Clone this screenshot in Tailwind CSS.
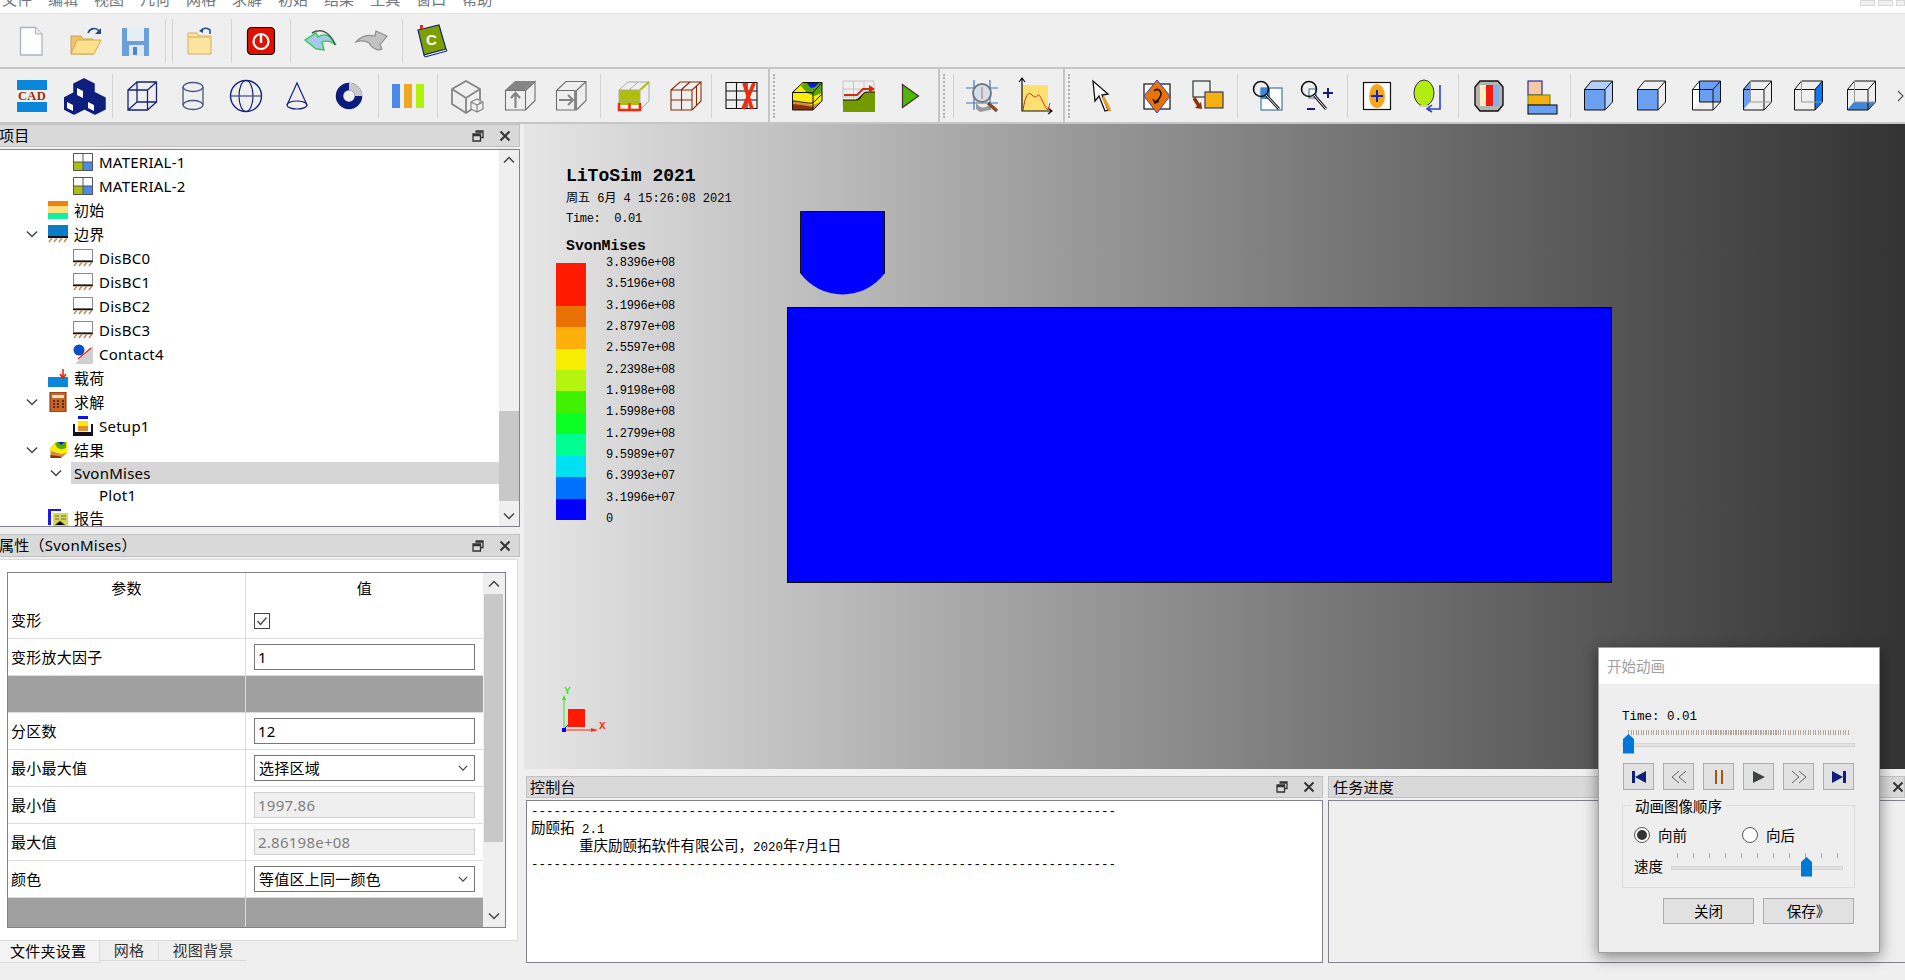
<!DOCTYPE html>
<html lang="zh-CN">
<head>
  <meta charset="UTF-8">
  <title>LiToSim 2021</title>
  <script src="https://cdn.jsdelivr.net/npm/@tailwindcss/browser@4"></script>
</head>
<body class="w-[1905px] h-[980px] overflow-hidden relative bg-[#efefef] text-black text-[15px] tracking-[0.25px] font-['Noto_Sans','Noto_Sans_CJK_SC',sans-serif]">

  <svg width="0" height="0" class="absolute">
    <defs>
      <symbol id="float" viewBox="0 0 12 12"><path d="M3.5 1h7.500v6.500h-2.500M1 4h7.500v7h-7.500zM1 5.500h7.500M3.500 2.200h7.500" fill="none" stroke="#333" stroke-width="1.300"/></symbol>
      <symbol id="close" viewBox="0 0 12 12"><path d="M1.500 1.500l9 9M10.500 1.500l-9 9" stroke="#333" stroke-width="2"/></symbol>
      <symbol id="chev" viewBox="0 0 12 12"><path d="M1 3.500l5 5 5-5" fill="none" stroke="#444" stroke-width="1.500"/></symbol>
      <symbol id="material" viewBox="0 0 20 18"><rect width="20" height="18" fill="#fff"/><rect y="9" width="10" height="9" fill="#a8bf10"/><rect x="10" y="9" width="10" height="9" fill="#4a8ae8"/><path d="M.5.500h19v17h-19zM10 0v18M0 9h20" fill="none" stroke="#555"/></symbol>
      <symbol id="disbc" viewBox="0 0 20 18"><rect x=".5" y=".5" width="19" height="11" fill="#fff" stroke="#8a8a8a"/><path d="M0 12.500h20" stroke="#111" stroke-width="1.500"/><path d="M1 17l3-4M6 17l3-4M11 17l3-4M16 17l3-4" stroke="#c08a5c" stroke-width="1.500"/></symbol>
    </defs>
  </svg>

  <!-- menu, cut off by the top of the window -->
  <div class="h-[14px] bg-white border-b border-[#e4e4e4] overflow-hidden relative">
    <div class="flex gap-[16px] pl-[2px] mt-[-11px] text-[15px] tracking-normal leading-[20px] text-[#6f7780]">
      <span>文件</span><span>编辑</span><span>视图</span><span>几何</span><span>网格</span><span>求解</span><span>初始</span><span>结果</span><span>工具</span><span>窗口</span><span>帮助</span>
    </div>
    <div class="absolute right-0 top-0 flex gap-[3px]">
      <div class="w-[15px] h-[6px] bg-[#eef0f2] border border-[#d8d8d8]"></div>
      <div class="w-[15px] h-[6px] bg-[#eef0f2] border border-[#d8d8d8]"></div>
      <div class="w-[9px] h-[6px] bg-[#eef0f2] border border-[#d8d8d8]"></div>
    </div>
  </div>

  <!-- first toolbar -->
  <div class="h-[55px] flex items-center pl-[11px] border-b-2 border-[#c6c6c6]">
    <svg width="40" height="40"><path d="M9.500 6.500h15l6.500 6.500v21h-21.500z" fill="#fff" stroke="#aab4bf" stroke-width="1.300"/><path d="M24.500 6.500v6.500h6.500" fill="#e8edf2" stroke="#aab4bf"/></svg>
    <svg width="40" height="40" class="ml-[14px]"><path d="M6 33v-18h10l2 3h10v15z" fill="#f2c36c" stroke="#c8a15a"/><path d="M6 33l6-14h24l-7 14z" fill="#fde08c" stroke="#d4a850"/><path d="M23 12c2-5 8-6 11-2" fill="none" stroke="#1f4d8a" stroke-width="1.600"/><path d="M36 7v6h-6z" fill="#1f4d8a"/></svg>
    <svg width="40" height="40" class="ml-[10px]"><path d="M7 7h27v28h-27z" fill="#6b9fd8"/><rect x="12" y="7" width="17" height="13" fill="#e6eef5"/><rect x="14" y="24" width="15" height="11" fill="#dfe8f0"/><rect x="18" y="26" width="4" height="8" fill="#4a86c8"/></svg>
    <div class="w-px h-[44px] bg-[#d4d4d4] ml-[10px]"></div>
    <div class="w-px h-[44px] bg-[#d4d4d4] ml-[6px]"></div>
    <svg width="40" height="40" class="ml-[6px]"><path d="M9 33v-21h9l2 3h12v18z" fill="#fde4a0" stroke="#d2ad66"/><path d="M9 16h23" stroke="#f2c36c" stroke-width="2"/><path d="M22 10c2-3 6-4 9-1v4" fill="none" stroke="#1f4d8a" stroke-width="1.500"/><path d="M20 10l4-3v5z" fill="#1f4d8a"/></svg>
    <div class="w-px h-[44px] bg-[#d4d4d4] ml-[12px]"></div>
    <svg width="40" height="40" class="ml-[9px]"><rect x="6.500" y="6.500" width="27" height="27" rx="4" fill="#de1200" stroke="#111" stroke-width="1.200"/><circle cx="20" cy="20.500" r="7.500" fill="none" stroke="#fff" stroke-width="2.200"/><path d="M20 14v8" stroke="#fff" stroke-width="2.400"/></svg>
    <div class="w-px h-[44px] bg-[#d4d4d4] ml-[9px]"></div>
    <svg width="40" height="40" class="ml-[9px]"><path d="M5 19l11-7 2 4c6-4 12-3 18 8-5-4-9-5-14-3l2 8-8-1z" fill="#a9c6ee" stroke="#1fd040" stroke-width="1.300"/><path d="M12 12c8-5 18-2 23 12" fill="none" stroke="#555" stroke-width="1.500"/></svg>
    <svg width="40" height="40" class="ml-[11px]"><path d="M36 15l-11-5-1 5c-8-2-14 0-19 6 6-2 10-1 13 1 3 6 9 8 13 6l-2-4z" fill="#c2c2c2" stroke="#8e8e8e" stroke-width="1.200"/></svg>
    <div class="w-px h-[44px] bg-[#d4d4d4] ml-[11px]"></div>
    <svg width="40" height="40" class="ml-[8px]"><path d="M7 9l21-5 7 24-22 6z" fill="#7e9f00" stroke="#14237a" stroke-width="1.200"/><path d="M13 34l22-6 1 2-22 6z" fill="#dfe6f0" stroke="#14237a"/><rect x="9" y="4" width="3" height="4" fill="#d8301a"/><text x="15" y="24" font-family="Liberation Sans" font-weight="700" font-size="15" fill="#fff">C</text></svg>
  </div>

  <!-- second toolbar -->
  <div class="h-[55px] flex items-center pl-[12px] border-b-2 border-[#c6c6c6]">
    <svg width="40" height="40"><rect x="5" y="4" width="30" height="10" fill="#0a86dc"/><rect x="5" y="26" width="30" height="10" fill="#0a86dc"/><text x="20" y="24" text-anchor="middle" font-family="Liberation Serif" font-weight="700" font-size="12.500" fill="#9a2e08">CAD</text></svg>
    <svg width="44" height="40" class="ml-[12px]"><path d="M20 3l10 5v11l-10 5-10-5v-11zM10 17l10 5v11l-10 5-10-5v-11zM31 17l10 5v11l-10 5-10-5v-11z" fill="#0f1f7e" stroke="#0f1f7e" stroke-width="1.500" stroke-linejoin="round"/><path d="M13 12l6 3v7l-6-3zM3 26l6 3v6l-6-3zM24 26l6 3v6l-6-3z" fill="#fff"/></svg>
    <div class="w-px h-[44px] bg-[#d4d4d4] ml-[4px]"></div>
    <svg width="40" height="40" class="ml-[9px]"><path d="M6 14h19.500v20h-19.500zM15 6h19.500v20h-19.500zM6 14l9-8M25.500 14l9-8M25.500 34l9-8M6 34l9-8" fill="none" stroke="#14237a" stroke-width="1.300"/></svg>
    <svg width="40" height="40" class="ml-[11px]"><ellipse cx="20" cy="11" rx="10" ry="4.500" fill="none" stroke="#4a5680" stroke-width="1.300"/><ellipse cx="20" cy="29" rx="10" ry="4.500" fill="none" stroke="#4a5680" stroke-width="1.300"/><path d="M10 11v18M30 11v18" stroke="#4a5680" stroke-width="1.300"/></svg>
    <svg width="40" height="40" class="ml-[13px]"><circle cx="20" cy="20" r="15.500" fill="none" stroke="#14237a" stroke-width="1.400"/><ellipse cx="20" cy="20" rx="7" ry="15.500" fill="none" stroke="#14237a" stroke-width="1.200"/><path d="M4.500 20h31" stroke="#4a5680" stroke-width="1.300"/></svg>
    <svg width="40" height="40" class="ml-[12px]"><ellipse cx="20" cy="29" rx="10" ry="4" fill="none" stroke="#14237a" stroke-width="1.200"/><path d="M10 29l10-22 10 22" fill="none" stroke="#14237a" stroke-width="1.200"/></svg>
    <svg width="40" height="40" class="ml-[12px]"><circle cx="20" cy="20" r="9.500" fill="none" stroke="#0b1b7e" stroke-width="7.500"/><path d="M20 10.500a9.500 9.500 0 0 1 9.500 9.500" fill="none" stroke="#c8c8c8" stroke-width="7.500"/></svg>
    <div class="w-px h-[44px] bg-[#d4d4d4] ml-[9px]"></div>
    <svg width="40" height="40" class="ml-[9px]"><rect x="4" y="8" width="8" height="24" fill="#4a8ae8"/><rect x="16" y="8" width="8" height="24" fill="#f0a820"/><rect x="28" y="8" width="8" height="24" fill="#b2f00e"/></svg>
    <div class="w-px h-[44px] bg-[#d4d4d4] ml-[9px]"></div>
    <svg width="40" height="40" class="ml-[8px]"><path d="M6 13l14-8 14 8v15l-14 9-14-9zM6 13l14 9 14-9M20 22v15" fill="none" stroke="#858585" stroke-width="1.800"/><path d="M25 26l6-3 6 3v7l-6 3-6-3zM25 26l6 3 6-3M31 29v7" fill="#efefef" stroke="#858585" stroke-width="1.200"/></svg>
    <svg width="40" height="40" class="ml-[13px]"><path d="M6 14h20l10-9h-20z" fill="#858585"/><path d="M6.500 14.500h20v19.500h-20zM26.500 14.500l9.500-9v19l-9.500 9.500" fill="none" stroke="#707070" stroke-width="1.100"/><path d="M16.500 32v-14M12 22l4.500-5 4.500 5" fill="none" stroke="#858585" stroke-width="2.200"/></svg>
    <svg width="40" height="40" class="ml-[12px]"><path d="M5.500 14.500h20v19.500h-20zM5.500 14.500l9.500-9h20v19l-9.500 9.500M25.500 14.500l9.500-9" fill="none" stroke="#707070" stroke-width="1.100"/><rect x="23" y="14" width="3" height="20" fill="#858585"/><path d="M8 24h14M17 19l5 5-5 5" fill="none" stroke="#858585" stroke-width="2.200"/></svg>
    <div class="w-px h-[44px] bg-[#d4d4d4] ml-[9px]"></div>
    <svg width="40" height="40" class="ml-[9px]"><rect x="9" y="14" width="21" height="15" fill="#aebf06"/><path d="M9 14h21v20h-21zM19.500 14v20M9 24h21M9 14l9-8h21l-9 8M39 6v19l-9 9M19 14l9-8" fill="none" stroke="#aaa" stroke-width="1"/><path d="M30 14l9-8" stroke="#aebf06" stroke-width="2"/><path d="M9 27v7h21v-7M19.500 27v7" fill="none" stroke="#f02a0a" stroke-width="2.500"/></svg>
    <svg width="40" height="40" class="ml-[12px]"><path d="M9 14h21v20h-21zM19.500 14v20M9 24h21M9 14l9-8h21l-9 8M39 6v19l-9 9M19 14l9-8M34.500 10v19" fill="none" stroke="#8a2a06" stroke-width="1.100"/></svg>
    <div class="w-px h-[44px] bg-[#d4d4d4] ml-[9px]"></div>
    <svg width="40" height="40" class="ml-[9px]"><path d="M5 6.500h31v26h-31zM15.500 6.500v26M26 6.500v26M5 15h31M5 24h31" fill="none" stroke="#111" stroke-width="1.100"/><path d="M23 7l8 26M33 7l-11 26" stroke="#f02a0a" stroke-width="3.600"/></svg>
    <div class="w-[2px] h-full bg-[#c6c6c6] ml-[8px]"></div>
    <div class="w-[3px] h-[44px] ml-[3px] border-l-2 border-dotted border-[#b0b0b0]"></div>
    <svg width="40" height="40" class="ml-[11px]"><path d="M5 34v-18l11-10h19v19l-9 9z" fill="#d58a48"/><path d="M5 16l11-10h19v19l-9 4-10-2-11-2z" fill="#f9ec0a"/><path d="M14 10l4-4h17v11l-8 3-7-3z" fill="#5aa600"/><path d="M19 6h14l-5 5-4 1z" fill="#0018f0"/><path d="M5 34v-6l10 1 11 2v3z" fill="#8a3206"/><path d="M5.500 16.500h20.500v17.500h-20.500zM5.500 16.500l10.500-10h19v18.500l-9 9M26 16.500l9-10M6 25c7 0 14 3 20 2l9-9" fill="none" stroke="#111" stroke-width="1"/></svg>
    <svg width="40" height="40" class="ml-[12px]"><path d="M4 5h31v24h-31zM14.500 5v24M25 5v24M4 13h31M4 21h31" fill="none" stroke="#c4c4c4"/><path d="M4 36v-12h13c6 0 4-8 12-8h7v20z" fill="#739a00"/><path d="M4 24h13c6 0 4-8 12-8h7" fill="none" stroke="#111" stroke-width="1.200"/><path d="M5 19h13l6-6h9" fill="none" stroke="#d02a10" stroke-width="1.800"/><path d="M30 9l6 4-6 4z" fill="#d02a10"/></svg>
    <svg width="40" height="40" class="ml-[12px]"><path d="M11.500 8.500l16 11.500-16 11.500z" fill="#4fb800" stroke="#4a3030" stroke-width="1.200"/></svg>
    <div class="w-[2px] h-full bg-[#c6c6c6] ml-[7px]"></div>
    <div class="w-[3px] h-[44px] ml-[3px] border-l-2 border-dotted border-[#b0b0b0]"></div>
    <div class="w-px h-[44px] bg-[#d4d4d4] ml-[7px]"></div>
    <svg width="40" height="40" class="ml-[8px]"><path d="M4 12h32M4 27h32M12 4v30M28 4v30" stroke="#3a78c0" stroke-width="1.200"/><circle cx="20" cy="17" r="9" fill="#cfe2ee" stroke="#777" stroke-width="2"/><path d="M20 11v12" stroke="#e25a3a"/><path d="M14 25c2 8 10 8 14 3v6l-10 2-4-3z" fill="#9a9a9a"/><path d="M26 27l9 8" stroke="#8a4a20" stroke-width="3.400"/></svg>
    <svg width="40" height="40" class="ml-[13px]"><rect x="7" y="9" width="26" height="26" fill="#fde070"/><path d="M7 3v32h29M4 6l3-4 3 4M33 32l4 3-4 3" fill="none" stroke="#111" stroke-width="1.200"/><path d="M8 34c3-18 6-18 9-15s4 2 6 0 6 12 10 15l2-7" fill="none" stroke="#c8301a"/></svg>
    <div class="w-[2px] h-full bg-[#c6c6c6] ml-[8px]"></div>
    <div class="w-[3px] h-[44px] ml-[3px] border-l-2 border-dotted border-[#b0b0b0]"></div>
    <svg width="40" height="40" class="ml-[11px]"><path d="M11 5l2 20 4-5 6 15 3-1-6-15 6-1z" fill="#fff" stroke="#111" stroke-width="1.300"/><path d="M21 21l7 14" stroke="#e89a20" stroke-width="3"/></svg>
    <svg width="40" height="40" class="ml-[15px]"><rect x="7" y="8" width="26" height="25" fill="#fff" stroke="#111" stroke-width="1.200"/><path d="M20 4l13 16-13 17-13-17z" fill="#ea7205" stroke="#2a44c8"/><path d="M17 15c4-4 9 1 6 6-1 3-3 4-5 5M16 23l2 4 4-2" fill="none" stroke="#111" stroke-width="1.500"/></svg>
    <svg width="40" height="40" class="ml-[10px]"><rect x="6" y="5" width="17" height="16" fill="#edf0ee" stroke="#222" stroke-width="1.100"/><rect x="18" y="16" width="18" height="16" fill="#f8b010" stroke="#22306a" stroke-width="1.100"/><path d="M7 22l5 8" stroke="#8a3206" stroke-width="3.400"/><path d="M8 32l7 1-1-7z" fill="#8a3206"/></svg>
    <div class="w-px h-[44px] bg-[#d4d4d4] ml-[10px]"></div>
    <svg width="40" height="40" class="ml-[12px]"><rect x="11" y="12" width="21" height="22" fill="#fff" stroke="#2a6aa8" stroke-width="1.100"/><rect x="11" y="12" width="9" height="11" fill="#3f86d8"/><circle cx="11" cy="13" r="7.500" fill="none" stroke="#111" stroke-width="1.600"/><path d="M16 19l13 14" stroke="#111" stroke-width="2.800"/><path d="M16 19l13 14" stroke="#fff" stroke-width="1"/></svg>
    <svg width="40" height="40" class="ml-[8px]"><rect x="12" y="13" width="7" height="9" fill="#fff" stroke="#2a6aa8"/><circle cx="12" cy="13" r="7.500" fill="none" stroke="#111" stroke-width="1.600"/><path d="M17 19l12 14" stroke="#111" stroke-width="2.800"/><path d="M17 19l12 14" stroke="#fff" stroke-width="1"/><path d="M26 17h10M31 12v10M10 33h8" stroke="#0f1f7e" stroke-width="2"/></svg>
    <div class="w-px h-[44px] bg-[#d4d4d4] ml-[10px]"></div>
    <svg width="40" height="40" class="ml-[9px]"><rect x="6.500" y="6.500" width="27" height="27" fill="#fff" stroke="#111" stroke-width="1.200"/><ellipse cx="20" cy="20" rx="8" ry="12" fill="#f6a818"/><path d="M14 20h12M20 14v12" stroke="#1224c8" stroke-width="2"/></svg>
    <svg width="40" height="40" class="ml-[10px]"><ellipse cx="17" cy="17" rx="10" ry="13" fill="#b2ec10" stroke="#333"/><path d="M12 30h12" stroke="#ccc" stroke-width="2"/><path d="M33 9v24h-12M25 29l-5 4 5 3" fill="none" stroke="#2a44c8" stroke-width="1.600"/></svg>
    <div class="w-px h-[44px] bg-[#d4d4d4] ml-[11px]"></div>
    <svg width="40" height="40" class="ml-[10px]"><path d="M11 5h18l5 6v18l-5 6h-18l-5-6v-18z" fill="#b4b4b4" stroke="#111" stroke-width="1.400"/><rect x="11" y="9" width="6" height="21" fill="#fbeebc"/><rect x="17" y="9" width="7" height="21" fill="#f01a10"/><rect x="24" y="9" width="6" height="21" fill="#86aee8"/></svg>
    <svg width="40" height="40" class="ml-[11px]"><rect x="8" y="5" width="14" height="14" fill="#f5c8a8" stroke="#1a1aa0" stroke-width="1.100"/><rect x="8" y="19" width="22" height="10" fill="#f8b010" stroke="#6a8a10" stroke-width="1.100"/><rect x="8" y="29" width="29" height="9" fill="#6a9ff2" stroke="#111" stroke-width="1.100"/></svg>
    <div class="w-px h-[44px] bg-[#d4d4d4] ml-[10px]"></div>
    <svg width="40" height="40" class="ml-[4px]"><path d="M9 13l7-8h21v21l-7 8z" fill="#b5d0f8"/><rect x="9" y="13" width="21" height="21" fill="#6a9ff2"/><path d="M9.500 13.500h20.500v20.500h-20.500zM9.500 13.500l7-8.500h21v21l-7.500 8M30 13.500l7.500-8.500" fill="none" stroke="#111" stroke-width="1"/></svg>
    <svg width="40" height="40" class="ml-[13px]"><rect x="9" y="13" width="21" height="21" fill="#6a9ff2"/><path d="M9.500 13.500h20.500v20.500h-20.500zM9.500 13.500l7-8.500h21v21l-7.500 8M30 13.500l7.500-8.500" fill="none" stroke="#111" stroke-width="1"/></svg>
    <svg width="40" height="40" class="ml-[15px]"><rect x="16" y="5" width="21" height="21" fill="#6a9ff2"/><path d="M16 26l-7 8v-21l7-8z" fill="#fff"/><path d="M9.500 13.500h20.500v20.500h-20.500zM9.500 13.500l7-8.500h21v21l-7.500 8M30 13.500l7.500-8.500M16.500 5v21h21" fill="none" stroke="#111" stroke-width="1"/></svg>
    <svg width="40" height="40" class="ml-[11px]"><path d="M16 5l-7 8v21l7-8z" fill="#6a9ff2"/><path d="M9.500 13.500h20.500v20.500h-20.500zM9.500 13.500l7-8.500h21v21l-7.500 8M30 13.500l7.500-8.500" fill="none" stroke="#111" stroke-width="1"/><path d="M16.500 5v21h21" fill="none" stroke="#999"/></svg>
    <svg width="40" height="40" class="ml-[12px]"><path d="M37 5l-7 8v21l7-8z" fill="#0a78f0"/><path d="M9.500 13.500h20.500v20.500h-20.500zM9.500 13.500l7-8.500h21v21l-7.500 8M30 13.500l7.500-8.500" fill="none" stroke="#111" stroke-width="1"/><path d="M16.500 5v21h21" fill="none" stroke="#999"/></svg>
    <svg width="40" height="40" class="ml-[13px]"><path d="M16 26h21l-7 8h-21z" fill="#3f86d8"/><path d="M9.500 13.500h20.500v20.500h-20.500zM9.500 13.500l7-8.500h21v21l-7.500 8M30 13.500l7.500-8.500" fill="none" stroke="#111" stroke-width="1"/><path d="M16.500 5v21h21" fill="none" stroke="#999"/></svg>
    <svg width="8" height="12" class="ml-[19px]"><path d="M1 1l5 5-5 5" fill="none" stroke="#555" stroke-width="1.200"/></svg>
  </div>

  <div class="flex h-[856px]">
    <!-- left docks -->
    <div class="w-[520px] shrink-0 flex flex-col">
      <div class="h-[23px] bg-[#d9d9d9] border border-l-0 border-[#c2c2c2] flex items-center justify-between pr-[8px]">
        <span class="-ml-[1px]">项目</span>
        <div class="flex gap-[15px]">
          <svg width="12" height="12"><use href="#float"/></svg>
          <svg width="12" height="12"><use href="#close"/></svg>
        </div>
      </div>
      <div class="mt-[2px] h-[378px] border border-l-0 border-[#82828f] bg-white flex overflow-hidden">
        <div class="flex-1 overflow-hidden">
          <div class="h-[24px] flex items-center pl-[73px] gap-[6px]"><svg width="20" height="18"><use href="#material"/></svg>MATERIAL-1</div>
          <div class="h-[24px] flex items-center pl-[73px] gap-[6px]"><svg width="20" height="18"><use href="#material"/></svg>MATERIAL-2</div>
          <div class="h-[24px] flex items-center pl-[48px] gap-[6px]"><svg width="20" height="18"><rect width="20" height="5" fill="#f08010"/><rect y="5" width="20" height="7" fill="#fde080"/><rect y="12" width="20" height="6" fill="#10f0a0"/></svg>初始</div>
          <div class="h-[24px] flex items-center pl-[26px] gap-[6px]"><svg width="12" height="12" class="mr-[4px]"><use href="#chev"/></svg><svg width="20" height="18"><rect width="20" height="11" fill="#0a7cc8"/><path d="M0 12h20" stroke="#111" stroke-width="2"/><path d="M1 17l3-4M6 17l3-4M11 17l3-4M16 17l3-4" stroke="#c08a5c" stroke-width="1.500"/></svg>边界</div>
          <div class="h-[24px] flex items-center pl-[73px] gap-[6px]"><svg width="20" height="18"><use href="#disbc"/></svg>DisBC0</div>
          <div class="h-[24px] flex items-center pl-[73px] gap-[6px]"><svg width="20" height="18"><use href="#disbc"/></svg>DisBC1</div>
          <div class="h-[24px] flex items-center pl-[73px] gap-[6px]"><svg width="20" height="18"><use href="#disbc"/></svg>DisBC2</div>
          <div class="h-[24px] flex items-center pl-[73px] gap-[6px]"><svg width="20" height="18"><use href="#disbc"/></svg>DisBC3</div>
          <div class="h-[24px] flex items-center pl-[73px] gap-[6px]"><svg width="20" height="20"><path d="M20 2v18h-18z" fill="#cfcfcf"/><circle cx="6" cy="6" r="5.500" fill="#0a50c8"/><path d="M5 15l13-11" stroke="#f01a10" stroke-width="1.200"/></svg>Contact4</div>
          <div class="h-[24px] flex items-center pl-[48px] gap-[6px]"><svg width="20" height="20"><rect y="9" width="20" height="10" fill="#0a86dc"/><path d="M15 1v9M12 6l3 4 3-4" fill="none" stroke="#f01a10" stroke-width="1.500"/></svg>载荷</div>
          <div class="h-[24px] flex items-center pl-[26px] gap-[6px]"><svg width="12" height="12" class="mr-[4px]"><use href="#chev"/></svg><svg width="20" height="20"><rect x="2" y="0" width="16" height="20" fill="#d0631c" stroke="#703010"/><rect x="4" y="3" width="12" height="3" fill="#f2e6d8"/><path d="M5 9h2M9 9h2M14 9h2M5 12h2M9 12h2M14 12h2M5 15h2M9 15h2M14 15h2" stroke="#222" stroke-width="1.500"/></svg>求解</div>
          <div class="h-[24px] flex items-center pl-[73px] gap-[6px]"><svg width="20" height="20"><rect x="5" y="0" width="10" height="3" fill="#1010f0"/><rect x="5" y="5" width="10" height="5" fill="#f8ec05"/><rect x="5" y="10" width="10" height="5" fill="#ea8a30"/><path d="M1 8v11h18v-11M1 17h18" fill="none" stroke="#112" stroke-width="2"/></svg>Setup1</div>
          <div class="h-[24px] flex items-center pl-[26px] gap-[6px]"><svg width="12" height="12" class="mr-[4px]"><use href="#chev"/></svg><svg width="20" height="20" viewBox="0 0 40 40"><path d="M5 36v-20l11-12h22v22l-12 10z" fill="#d58a48"/><path d="M5 16l11-12h22v22l-12 2-21-6z" fill="#f9ec0a"/><path d="M14 8l4-4h18v12l-9 3-8-3z" fill="#5aa600"/><path d="M20 4h12l-5 6z" fill="#0018f0"/><path d="M5 36v-6l21 3v3z" fill="#8a3206"/></svg>结果</div>
          <div class="h-[22px] flex items-center pl-[50px] gap-[9px]"><svg width="12" height="12"><use href="#chev"/></svg><span class="flex-1 bg-[#d6d6d6] h-full flex items-center pl-[3px]">SvonMises</span></div>
          <div class="h-[22px] flex items-center pl-[99px]">Plot1</div>
          <div class="h-[24px] flex items-center pl-[48px] gap-[6px]"><svg width="20" height="18"><path d="M0 0h13v2h-10v14h-3z" fill="#1a1af0"/><rect x="5" y="4" width="15" height="14" fill="#d8d850"/><path d="M7 7h4M13 7h5M7 10h4M13 10h5M7 16l5-4 5 4" stroke="#666"/></svg>报告</div>
        </div>
        <div class="w-[20px] bg-[#efefef] relative flex flex-col items-center shrink-0">
          <svg width="12" height="12" class="absolute top-[4px] rotate-180"><use href="#chev"/></svg>
          <div class="absolute top-[261px] w-full h-[90px] bg-[#c8c8c8]"></div>
          <svg width="12" height="12" class="absolute bottom-[4px]"><use href="#chev"/></svg>
        </div>
      </div>

      <div class="h-[23px] mt-[7px] bg-[#d9d9d9] border border-l-0 border-[#c2c2c2] flex items-center justify-between pr-[8px]">
        <span class="-ml-[1px]">属性（SvonMises）</span>
        <div class="flex gap-[15px]">
          <svg width="12" height="12"><use href="#float"/></svg>
          <svg width="12" height="12"><use href="#close"/></svg>
        </div>
      </div>
      <div class="mt-[2px] h-[382px] w-[518px] bg-white border border-l-0 border-[#dcdcdc] pl-[7px] pt-[12px]">
        <div class="w-[499px] h-[356px] border border-[#82828f] flex overflow-hidden">
          <div class="flex-1">
            <div class="grid grid-cols-[238px_237px] h-[30px]">
              <div class="flex items-center justify-center border-r border-[#dcdcdc]">参数</div>
              <div class="flex items-center justify-center">值</div>
            </div>
            <div class="grid grid-cols-[238px_237px] h-[36px] border-b border-[#dcdcdc]">
              <div class="flex items-center pl-[3px] border-r border-[#dcdcdc]">变形</div>
              <div class="flex items-center pl-[8px]"><div class="w-[16px] h-[16px] border border-[#444] flex items-center justify-center"><svg width="12" height="12"><path d="M1.500 6l3 3.500 6-7" fill="none" stroke="#444" stroke-width="1.300"/></svg></div></div>
            </div>
            <div class="grid grid-cols-[238px_237px] h-[37px] border-b border-[#dcdcdc]">
              <div class="flex items-center pl-[3px] border-r border-[#dcdcdc]">变形放大因子</div>
              <div class="flex items-center pl-[8px]"><div class="w-[221px] h-[26px] border border-[#777] flex items-center pl-[3px]">1</div></div>
            </div>
            <div class="grid grid-cols-[238px_237px] h-[37px] border-b border-[#dcdcdc] bg-[#a0a0a1]"><div class="border-r border-[#dcdcdc]"></div><div></div></div>
            <div class="grid grid-cols-[238px_237px] h-[37px] border-b border-[#dcdcdc]">
              <div class="flex items-center pl-[3px] border-r border-[#dcdcdc]">分区数</div>
              <div class="flex items-center pl-[8px]"><div class="w-[221px] h-[26px] border border-[#777] flex items-center pl-[3px]">12</div></div>
            </div>
            <div class="grid grid-cols-[238px_237px] h-[37px] border-b border-[#dcdcdc]">
              <div class="flex items-center pl-[3px] border-r border-[#dcdcdc]">最小最大值</div>
              <div class="flex items-center pl-[8px]"><div class="w-[221px] h-[26px] border border-[#777] flex items-center justify-between pl-[4px] pr-[6px]">选择区域<svg width="10" height="10"><use href="#chev"/></svg></div></div>
            </div>
            <div class="grid grid-cols-[238px_237px] h-[37px] border-b border-[#dcdcdc]">
              <div class="flex items-center pl-[3px] border-r border-[#dcdcdc]">最小值</div>
              <div class="flex items-center pl-[8px]"><div class="w-[221px] h-[26px] border border-[#d0d0d0] bg-[#efefef] text-[#808080] flex items-center pl-[3px]">1997.86</div></div>
            </div>
            <div class="grid grid-cols-[238px_237px] h-[37px] border-b border-[#dcdcdc]">
              <div class="flex items-center pl-[3px] border-r border-[#dcdcdc]">最大值</div>
              <div class="flex items-center pl-[8px]"><div class="w-[221px] h-[26px] border border-[#d0d0d0] bg-[#efefef] text-[#808080] flex items-center pl-[3px]">2.86198e+08</div></div>
            </div>
            <div class="grid grid-cols-[238px_237px] h-[37px] border-b border-[#dcdcdc]">
              <div class="flex items-center pl-[3px] border-r border-[#dcdcdc]">颜色</div>
              <div class="flex items-center pl-[8px]"><div class="w-[221px] h-[26px] border border-[#777] flex items-center justify-between pl-[4px] pr-[6px]">等值区上同一颜色<svg width="10" height="10"><use href="#chev"/></svg></div></div>
            </div>
            <div class="grid grid-cols-[238px_237px] h-[30px] bg-[#a0a0a1]"><div class="border-r border-[#dcdcdc]"></div><div></div></div>
          </div>
          <div class="w-[22px] bg-[#efefef] relative flex flex-col items-center shrink-0">
            <svg width="12" height="12" class="absolute top-[5px] rotate-180"><use href="#chev"/></svg>
            <div class="absolute top-[21px] left-[1px] w-[19px] h-[248px] bg-[#c8c8c8]"></div>
            <svg width="12" height="12" class="absolute bottom-[5px]"><use href="#chev"/></svg>
          </div>
        </div>
      </div>
      <div class="flex h-[21px] items-start">
        <div class="w-[100px] h-[22px] pl-[10px] flex items-center border-b border-r border-[#dcdcdc] bg-[#f3f3f3]">文件夹设置</div>
        <div class="w-[59px] h-[20px] flex items-center justify-center border-b border-r border-[#dcdcdc] text-[#333]">网格</div>
        <div class="w-[88px] h-[20px] flex items-center justify-center border-b border-[#dcdcdc] text-[#333]">视图背景</div>
      </div>
    </div>

    <!-- viewport and bottom docks -->
    <div class="flex-1 ml-[4px] flex flex-col min-w-0">
      <div class="h-[645px] relative overflow-hidden tracking-normal bg-gradient-to-r from-[#e6e6e6] to-[#333333]">
        <div class="absolute left-[42px] top-[43px] font-['Liberation_Mono','Noto_Sans_CJK_SC',monospace] leading-none">
          <div class="text-[18px] font-bold leading-[18px]">LiToSim 2021</div>
          <div class="text-[12px] mt-[7px] leading-[14px]">周五 6月 4 15:26:08 2021</div>
          <div class="text-[12px] tracking-[-0.3px] mt-[6px] leading-[14px] whitespace-pre">Time:  0.01</div>
          <div class="text-[14.800px] font-bold mt-[13px] leading-[14px]">SvonMises</div>
        </div>
        <!-- colour legend -->
        <div class="absolute left-[32px] top-[139px] w-[30px] flex flex-col">
          <div class="h-[43px] bg-[#ff1a00]"></div><div class="h-[21px] bg-[#ea7205]"></div><div class="h-[22px] bg-[#fdb00c]"></div><div class="h-[21px] bg-[#f8ee05]"></div><div class="h-[21px] bg-[#b4f40f]"></div><div class="h-[22px] bg-[#3ef200]"></div><div class="h-[21px] bg-[#0cff24]"></div><div class="h-[22px] bg-[#00ff90]"></div><div class="h-[21px] bg-[#00e2f4]"></div><div class="h-[22px] bg-[#0070ff]"></div><div class="h-[21px] bg-[#0000ff]"></div>
        </div>
        <div class="absolute left-[82px] top-[129px] flex flex-col font-['Liberation_Mono',monospace] text-[12px] tracking-[-0.3px] leading-[21.350px]">
          <span>3.8396e+08</span><span>3.5196e+08</span><span>3.1996e+08</span><span>2.8797e+08</span><span>2.5597e+08</span><span>2.2398e+08</span><span>1.9198e+08</span><span>1.5998e+08</span><span>1.2799e+08</span><span>9.5989e+07</span><span>6.3993e+07</span><span>3.1996e+07</span><span>0</span>
        </div>
        <!-- bodies -->
        <svg width="86" height="86" class="absolute left-[276px] top-[87px]"><path d="M.5.500h84v62A52.500 52.500 0 0 1 .5 62.500z" fill="#0000ff"/><path d="M.5 62v-61.500h84v62" fill="none" stroke="#111" stroke-width="1"/></svg>
        <div class="absolute left-[263px] top-[183px] w-[825px] h-[276px] bg-[#0000ff] border border-black"></div>
        <!-- axes -->
        <svg width="60" height="60" class="absolute left-[30px] top-[562px]"><rect x="14" y="23" width="17" height="18" fill="#ff1a00"/><path d="M10 44v-33" stroke="#1ef01e" stroke-width="1"/><path d="M8 14l2-5 2 5z" fill="#1ef01e"/><path d="M10 44h33" stroke="#ff2a10"/><path d="M37 42l6 2-6 2z" fill="#ff2a10"/><rect x="8" y="42" width="4" height="4" fill="#0000ff"/><path d="M11 42l3-3" stroke="#0000ff"/><text x="10" y="8" font-family="Liberation Mono" font-weight="700" font-size="11" fill="#1ef01e">Y</text><text x="45" y="43" font-family="Liberation Mono" font-weight="700" font-size="11" fill="#ff2a10">X</text></svg>
      </div>

      <div class="flex mt-[7px] pl-[2px] h-[187px]">
        <div class="w-[797px] flex flex-col">
          <div class="h-[22px] bg-[#d9d9d9] border border-[#c2c2c2] flex items-center justify-between pl-[3px] pr-[7px]">
            <span>控制台</span>
            <div class="flex gap-[15px]">
              <svg width="12" height="12"><use href="#float"/></svg>
              <svg width="12" height="12"><use href="#close"/></svg>
            </div>
          </div>
          <div class="mt-[2px] h-[163px] bg-white border border-[#82828f] px-[4px] pt-[3px] tracking-normal font-['Liberation_Mono','Noto_Sans_CJK_SC',monospace] text-[12.500px] leading-[17px] overflow-hidden">
            <div class="whitespace-pre">------------------------------------------------------------------------------</div>
            <div class="whitespace-pre"><span class="text-[14.500px]">励颐拓</span> 2.1</div>
            <div class="whitespace-pre pl-[48px]"><span class="text-[14.500px]">重庆励颐拓软件有限公司，</span>2020<span class="text-[14.500px]">年</span>7<span class="text-[14.500px]">月</span>1<span class="text-[14.500px]">日</span></div>
            <div class="whitespace-pre">------------------------------------------------------------------------------</div>
          </div>
        </div>
        <div class="flex-1 ml-[5px] flex flex-col">
          <div class="h-[22px] bg-[#d9d9d9] border border-[#c2c2c2] flex items-center justify-between pl-[4px] pr-[0px]">
            <span>任务进度</span>
            <svg width="12" height="12"><use href="#close"/></svg>
          </div>
          <div class="mt-[2px] h-[163px] border border-r-0 border-[#82828f]"></div>
        </div>
      </div>
    </div>
  </div>

  <!-- animation dialog -->
  <div class="absolute left-[1598px] top-[647px] w-[282px] h-[306px] bg-[#eeeeee] border border-[#a0a0a0] tracking-normal shadow-[0_4px_14px_rgba(0,0,0,0.45)] font-['Noto_Sans_CJK_SC',sans-serif] text-[14.500px]">
    <div class="h-[36px] bg-white flex items-center pl-[8px] text-[#a0a0a0]">开始动画</div>
    <div class="pt-[25px] pl-[23px] font-['Liberation_Mono',monospace] text-[12.500px] leading-[16px]">Time: 0.01</div>
    <div class="relative h-[30px] mt-[5px] ml-[23px] w-[233px]">
      <div class="absolute left-[6px] top-0 w-[221px] h-[5px] bg-[repeating-linear-gradient(90deg,#b0a89c_0,#b0a89c_1px,transparent_1px,transparent_2.500px)]"></div>
      <div class="absolute left-0 top-[13px] w-full h-[4px] bg-[#e4e4e4] border border-[#d4d4d4]"></div>
      <svg width="12" height="20" class="absolute left-[1px] top-[4px]"><path d="M0 5l5.500-5 5.500 5v14.500h-11z" fill="#0078d7"/></svg>
    </div>
    <div class="flex gap-[9px] pl-[24px] mt-[3px]">
      <div class="w-[31px] h-[27px] bg-[#e1e1e1] border border-[#adadad] flex items-center justify-center"><svg width="16" height="14"><rect x="1" y="1" width="3" height="12" fill="#0f1f7e"/><path d="M15 1v12l-11-6z" fill="#0f1f7e"/></svg></div>
      <div class="w-[31px] h-[27px] bg-[#e1e1e1] border border-[#adadad] flex items-center justify-center"><svg width="16" height="14"><path d="M8 1l-7 6 7 6M15 1l-7 6 7 6" fill="none" stroke="#555" stroke-width=".9"/></svg></div>
      <div class="w-[31px] h-[27px] bg-[#e1e1e1] border border-[#adadad] flex items-center justify-center"><svg width="10" height="14"><path d="M1 0h2v14h-2zM7 0h2v14h-2z" fill="#ac5410"/></svg></div>
      <div class="w-[31px] h-[27px] bg-[#e1e1e1] border border-[#adadad] flex items-center justify-center"><svg width="12" height="12"><path d="M0 0l12 6-12 6z" fill="#3e4440"/></svg></div>
      <div class="w-[31px] h-[27px] bg-[#e1e1e1] border border-[#adadad] flex items-center justify-center"><svg width="16" height="14"><path d="M1 1l7 6-7 6M8 1l7 6-7 6" fill="none" stroke="#555" stroke-width=".9"/></svg></div>
      <div class="w-[31px] h-[27px] bg-[#e1e1e1] border border-[#adadad] flex items-center justify-center"><svg width="16" height="14"><path d="M1 1v12l11-6z" fill="#0f1f7e"/><rect x="12" y="1" width="3" height="12" fill="#0f1f7e"/></svg></div>
    </div>
    <div class="relative mt-[15px] ml-[23px] w-[233px] h-[83px] border border-[#dcdcdc]">
      <span class="absolute left-[8px] -top-[10px] px-[4px] bg-[#eeeeee] leading-[20px]">动画图像顺序</span>
      <div class="flex items-center h-[20px] mt-[19px] ml-[11px]">
        <div class="w-[16px] h-[16px] rounded-full border border-[#555] bg-white flex items-center justify-center"><div class="w-[10px] h-[10px] rounded-full bg-[#333]"></div></div>
        <span class="ml-[8px] w-[84px]">向前</span>
        <div class="w-[16px] h-[16px] rounded-full border border-[#555] bg-white"></div>
        <span class="ml-[8px]">向后</span>
      </div>
      <div class="flex items-center h-[26px] mt-[8px] ml-[11px]">
        <span>速度</span>
        <div class="relative w-[172px] h-[26px] ml-[8px]">
          <div class="absolute left-[6px] top-0 w-[161px] h-[5px] bg-[repeating-linear-gradient(90deg,#a8a8a8_0,#a8a8a8_1px,transparent_1px,transparent_16px)]"></div>
          <div class="absolute left-0 top-[13px] w-full h-[4px] bg-[#e4e4e4] border border-[#d4d4d4]"></div>
          <svg width="12" height="20" class="absolute left-[130px] top-[4px]"><path d="M0 5l5.500-5 5.500 5v14.500h-11z" fill="#0078d7"/></svg>
        </div>
      </div>
    </div>
    <div class="flex gap-[9px] pl-[64px] mt-[10px]">
      <div class="w-[91px] h-[26px] bg-[#e1e1e1] border border-[#adadad] flex items-center justify-center">关闭</div>
      <div class="w-[91px] h-[26px] bg-[#e1e1e1] border border-[#adadad] flex items-center justify-center">保存》</div>
    </div>
  </div>
</body>
</html>
